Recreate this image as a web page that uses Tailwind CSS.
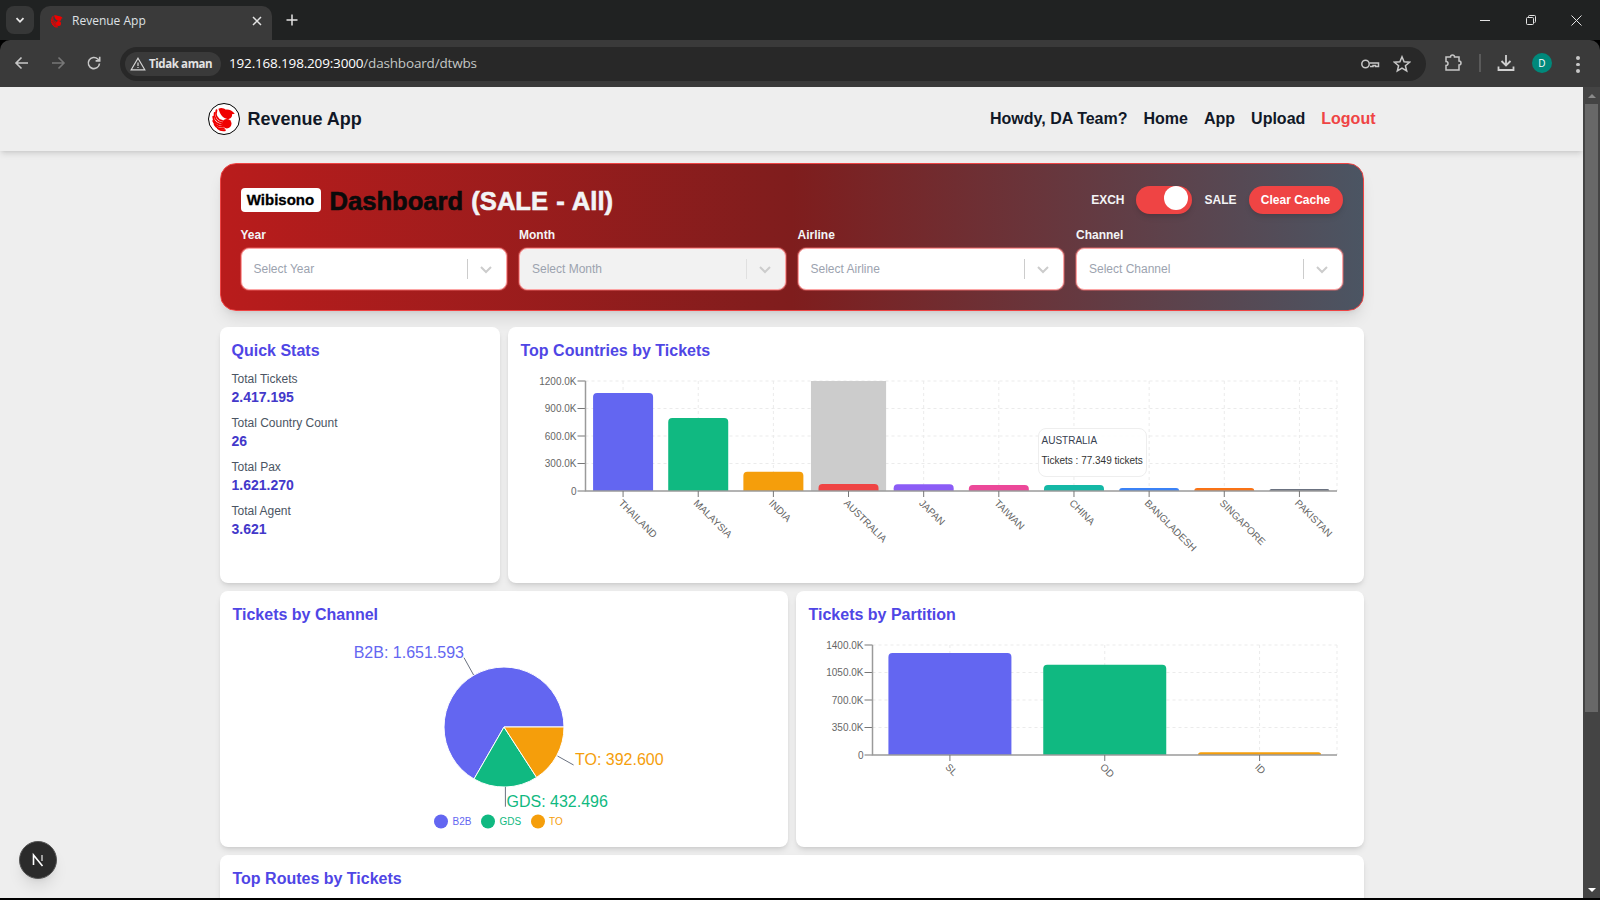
<!DOCTYPE html>
<html lang="en">
<head>
  <meta charset="UTF-8" />
  <meta name="viewport" content="width=device-width, initial-scale=1" />
  <title>Revenue App</title>
  <script src="https://cdn.jsdelivr.net/npm/@tailwindcss/browser@4"></script>
</head>
<body class="h-screen overflow-hidden flex flex-col bg-black font-['Liberation_Sans',Arial,sans-serif]">

  <!-- logo used by the tab and the navbar -->
  <svg class="hidden">
    <symbol id="bird" viewBox="0 0 32 32">
      <g fill="none" stroke="#f00000" stroke-width="1.9" stroke-linecap="round">
        <path d="M8 6.500C6.500 11 8 16 14 18" />
        <path d="M6 9.500C5 14 7.500 19 14 20.500" />
        <path d="M4.500 13.500C4.500 18 8 21.500 14.500 22.500" />
        <path d="M4.500 18C6 22 10 24.500 15 24.500" />
        <path d="M6 22C8 25.500 12 27 16 26.500" />
        <path d="M9.500 26C11.500 27.800 14 28.500 17 28" />
      </g>
      <path fill="#f00000" d="M10 5C13 3.500 16 4.500 18 6C21 5.500 25 7 27.500 10.500L24.500 11C25 13 24 15.500 21 16C17 16 13 13 11.500 9Z" />
      <circle cx="19" cy="21" r="5" fill="#f00000" />
    </symbol>
  </svg>

  <!-- browser tab strip -->
  <div class="relative h-10 shrink-0 bg-[#202222] flex items-end font-['Open_Sans',sans-serif]">
    <div class="absolute left-[6px] top-[6px] w-7 h-7 rounded-lg bg-[#363737] flex items-center justify-center">
      <svg width="12" height="12" viewBox="0 0 12 12" fill="none" stroke="#e8e8e8" stroke-width="1.8"><path d="M2.500 4.200 6 7.800 9.500 4.200" /></svg>
    </div>
    <div class="ml-10 w-[232px] h-[34px] rounded-t-[10px] bg-[#3a3a3a] flex items-center pl-[9px] pr-[9px] pb-[5px] text-[12px] text-[#dfe1e5]">
      <svg width="16" height="16" class="shrink-0"><use href="#bird" /></svg>
      <span class="ml-[7px] flex-1">Revenue App</span>
      <svg width="12" height="12" viewBox="0 0 12 12" stroke="#e3e3e3" stroke-width="1.5"><path d="M2 2 10 10M10 2 2 10" /></svg>
    </div>
    <svg class="ml-[13px] mb-[13px]" width="14" height="14" viewBox="0 0 14 14" stroke="#e3e3e3" stroke-width="1.5"><path d="M7 1.500V12.500M1.500 7H12.500" /></svg>
    <div class="ml-auto flex items-center h-10 text-[#e3e3e3]">
      <svg class="mr-[36px]" width="10" height="10" viewBox="0 0 10 10" stroke="currentColor"><path d="M0 5.500H10" /></svg>
      <svg class="mr-[35px]" width="10" height="10" viewBox="0 0 10 10" fill="none" stroke="currentColor"><rect x=".5" y="2.500" width="7" height="7" rx="1" /><path d="M2.500 2.500V1.500Q2.500 .5 3.500 .5H8.500Q9.500 .5 9.500 1.500V6.500Q9.500 7.500 8.500 7.500" /></svg>
      <svg class="mr-[18px]" width="11" height="11" viewBox="0 0 11 11" stroke="currentColor"><path d="M.5 .5 10.500 10.500M10.500 .5 .5 10.500" /></svg>
    </div>
  </div>

  <!-- browser toolbar -->
  <div class="h-[47px] shrink-0 bg-[#3a3a3a] rounded-t-[10px] flex items-center font-['Open_Sans',sans-serif] relative">
    <svg class="absolute left-[13px] top-[14px]" width="18" height="18" viewBox="0 0 18 18" fill="none" stroke="#c7c7c7" stroke-width="1.6"><path d="M15 9H3.500M8.500 3.500 3 9l5.500 5.500" /></svg>
    <svg class="absolute left-[49px] top-[14px]" width="18" height="18" viewBox="0 0 18 18" fill="none" stroke="#777" stroke-width="1.600"><path d="M3 9H14.500M9.500 3.500 15 9l-5.500 5.500" /></svg>
    <svg class="absolute left-[85px] top-[14px]" width="18" height="18" viewBox="0 0 18 18" fill="none" stroke="#c7c7c7" stroke-width="1.600"><path d="M14.500 9.500A5.600 5.600 0 1 1 12.800 5L14.500 6.700" /><path d="M14.700 2.800V6.900H10.600" /></svg>

    <div class="ml-[120px] w-[1306px] h-[34px] rounded-full bg-[#282828] flex items-center pl-[5px] relative">
      <div class="h-6 w-[96px] rounded-full bg-[#3a3a3a] flex items-center pl-[5px] text-[11.5px] font-bold text-[#e3e3e3] tracking-[-0.4px]">
        <svg width="16" height="16" viewBox="0 0 16 16" fill="none" stroke="#d5d5d5" stroke-width="1.200"><path d="M8 2.200 14.800 13.800H1.200Z" /><path d="M8 6.500V10M8 11V12" /></svg>
        <span class="ml-[3px]">Tidak aman</span>
      </div>
      <div class="ml-2 text-[13.5px] text-white tracking-[-0.17px]">192.168.198.209:3000<span class="text-[#c4c7c5]">/dashboard/dtwbs</span></div>
      <svg class="absolute left-[1240px] top-[9px]" width="20" height="16" viewBox="0 0 20 16" fill="none" stroke="#c7c7c7" stroke-width="1.500"><circle cx="5.500" cy="8" r="3.700" /><path d="M9.500 7H18.500V10.500H15.500V9.500H13V10.500H10" /></svg>
      <svg class="absolute left-[1273px] top-[8px]" width="18" height="18" viewBox="0 0 18 18" fill="none" stroke="#c7c7c7" stroke-width="1.500"><path d="M9 1.800 11.100 6.800 16.500 7.200 12.400 10.700 13.700 16 9 13.200 4.300 16 5.600 10.700 1.500 7.200 6.900 6.800Z" /></svg>
    </div>

    <svg class="absolute left-[1444px] top-[14px]" width="18" height="18" viewBox="0 0 18 18" fill="none" stroke="#c7c7c7" stroke-width="1.500"><path d="M2 3H6.500Q6.500 1 8.500 1T10.500 3H15V7Q17 7 17 9T15 11V16H2V11.500Q4 11.500 4 9.500T2 7.500Z" /></svg>
    <div class="absolute left-[1479px] top-[14px] w-[2px] h-[18px] bg-[#5a5a5a]"></div>
    <svg class="absolute left-[1497px] top-[14px]" width="18" height="18" viewBox="0 0 18 18" fill="none" stroke="#d0d0d0" stroke-width="1.800"><path d="M9 1V11M4.500 7 9 11.500 13.500 7M1.500 12.500V16H16.500V12.500" /></svg>
    <div class="absolute left-[1532px] top-[13px] w-5 h-5 rounded-full bg-[#00897b] text-[10px] text-white flex items-center justify-center">D</div>
    <div class="absolute left-[1576px] top-[16px] flex flex-col gap-[3px]">
      <div class="w-[3.500px] h-[3.500px] rounded-full bg-[#c7c7c7]"></div>
      <div class="w-[3.500px] h-[3.500px] rounded-full bg-[#c7c7c7]"></div>
      <div class="w-[3.500px] h-[3.500px] rounded-full bg-[#c7c7c7]"></div>
    </div>
  </div>

  <!-- page + scrollbar -->
  <div class="flex-1 min-h-0 flex">
    <div class="relative flex-1 min-w-0 bg-[#eeeeee] overflow-hidden">
      <header class="h-16 shadow-md bg-[#eeeeee]">
        <div class="w-[1168px] h-full mx-auto flex items-center justify-between text-[#111827] font-bold">
          <div class="flex items-center gap-2 text-[18px]">
            <div class="w-8 h-8 rounded-full bg-white border border-black">
              <svg width="30" height="30"><use href="#bird" /></svg>
            </div>
            Revenue App
          </div>
          <nav class="flex items-center gap-4 text-[16px]">
            <span>Howdy, DA Team?</span>
            <a>Home</a>
            <a>App</a>
            <a>Upload</a>
            <a class="text-[#ef4444]">Logout</a>
          </nav>
        </div>
      </header>

      <main class="w-[1144px] mx-auto pt-3">
        <!-- filter hero -->
        <section class="h-[148px] rounded-2xl border border-[#ef4444] shadow-lg bg-linear-to-r/srgb from-[#b91c1c] via-[#7f1d1d] to-[#4b5563] p-5 mb-4">
          <div class="flex items-center justify-between h-8 mb-[11px]">
            <div class="flex items-center gap-[9px]">
              <span class="h-6 w-[80px] rounded bg-white text-black font-bold text-[15px] [-webkit-text-stroke:0.3px] flex items-center justify-center">Wibisono</span>
              <h1 class="text-[25.6px] leading-8 pt-[2px] font-bold text-[#0a0a0a] [-webkit-text-stroke:0.6px] [word-spacing:1px]">Dashboard <span class="text-[#f3f4f6]">(SALE - All)</span></h1>
            </div>
            <div class="flex items-center gap-3 text-[12px] font-bold text-[#f3f4f6]">
              <span>EXCH</span>
              <div class="relative w-14 h-7 rounded-full bg-[#ef4444] shadow-md">
                <div class="absolute right-1 top-0 w-6 h-6 rounded-full bg-white"></div>
              </div>
              <span>SALE</span>
              <button class="h-7 w-[94px] rounded-full bg-[#ef4444] text-white text-[12px] shadow-md">Clear Cache</button>
            </div>
          </div>
          <div class="grid grid-cols-4 gap-3">
            <div>
              <label class="block text-[12px] leading-4 font-bold text-[#f3f4f6] mb-[5px]">Year</label>
              <div class="h-[42px] rounded-lg bg-white border border-[#fca5a5] ring-1 ring-[#f87171]/40 flex items-center pl-3 text-[12px] text-[#9ca3af]">
                <span class="flex-1">Select Year</span>
                <div class="w-px h-5 bg-[#ccc]"></div>
                <svg class="ml-[11px] mr-[13px]" width="14" height="14" viewBox="0 0 14 14" fill="none" stroke="#ccc" stroke-width="2"><path d="M2 5 7 10 12 5" /></svg>
              </div>
            </div>
            <div>
              <label class="block text-[12px] leading-4 font-bold text-[#f3f4f6] mb-[5px]">Month</label>
              <div class="h-[42px] rounded-lg bg-[#f2f2f2] border border-[#fca5a5] ring-1 ring-[#f87171]/40 flex items-center pl-3 text-[12px] text-[#9ca3af]">
                <span class="flex-1">Select Month</span>
                <div class="w-px h-5 bg-[#e0e0e0]"></div>
                <svg class="ml-[11px] mr-[13px]" width="14" height="14" viewBox="0 0 14 14" fill="none" stroke="#ccc" stroke-width="2"><path d="M2 5 7 10 12 5" /></svg>
              </div>
            </div>
            <div>
              <label class="block text-[12px] leading-4 font-bold text-[#f3f4f6] mb-[5px]">Airline</label>
              <div class="h-[42px] rounded-lg bg-white border border-[#fca5a5] ring-1 ring-[#f87171]/40 flex items-center pl-3 text-[12px] text-[#9ca3af]">
                <span class="flex-1">Select Airline</span>
                <div class="w-px h-5 bg-[#ccc]"></div>
                <svg class="ml-[11px] mr-[13px]" width="14" height="14" viewBox="0 0 14 14" fill="none" stroke="#ccc" stroke-width="2"><path d="M2 5 7 10 12 5" /></svg>
              </div>
            </div>
            <div>
              <label class="block text-[12px] leading-4 font-bold text-[#f3f4f6] mb-[5px]">Channel</label>
              <div class="h-[42px] rounded-lg bg-white border border-[#fca5a5] ring-1 ring-[#f87171]/40 flex items-center pl-3 text-[12px] text-[#9ca3af]">
                <span class="flex-1">Select Channel</span>
                <div class="w-px h-5 bg-[#ccc]"></div>
                <svg class="ml-[11px] mr-[13px]" width="14" height="14" viewBox="0 0 14 14" fill="none" stroke="#ccc" stroke-width="2"><path d="M2 5 7 10 12 5" /></svg>
              </div>
            </div>
          </div>
        </section>

        <!-- row 1 -->
        <div class="grid grid-cols-4 gap-2 mb-2">
          <div class="h-64 bg-white rounded-lg shadow-md p-3">
            <h2 class="text-base font-bold text-[#4f46e5] mb-2">Quick Stats</h2>
            <div class="space-y-2">
              <div><p class="text-xs text-[#4b5563]">Total Tickets</p><p class="text-sm font-bold text-[#4338ca]">2.417.195</p></div>
              <div><p class="text-xs text-[#4b5563]">Total Country Count</p><p class="text-sm font-bold text-[#4338ca]">26</p></div>
              <div><p class="text-xs text-[#4b5563]">Total Pax</p><p class="text-sm font-bold text-[#4338ca]">1.621.270</p></div>
              <div><p class="text-xs text-[#4b5563]">Total Agent</p><p class="text-sm font-bold text-[#4338ca]">3.621</p></div>
            </div>
          </div>
          <div class="relative col-span-3 h-64 bg-white rounded-lg shadow-md p-3">
            <h2 class="ml-px text-base font-bold text-[#4f46e5]">Top Countries by Tickets</h2>
            <svg id="countries" width="832" height="208" viewBox="520 363 832 208" class="block overflow-visible"></svg>
            <!-- hover tooltip -->
            <div class="absolute left-[530px] top-[101px] w-[109px] h-[49px] rounded-lg bg-white/90 border border-[#eeeeee] pl-[3px] pt-[5px] text-[10px] whitespace-nowrap">
              <p class="leading-[14px] text-[#374151]">AUSTRALIA</p>
              <p class="mt-[6px] leading-[14px] text-[#333]">Tickets : 77.349 tickets</p>
            </div>
          </div>
        </div>

        <!-- row 2 -->
        <div class="grid grid-cols-2 gap-2 mb-2">
          <div class="h-64 bg-white rounded-lg shadow-md p-3">
            <h2 class="ml-px text-base font-bold text-[#4f46e5]">Tickets by Channel</h2>
            <svg width="544" height="208" viewBox="232 627 544 208" class="block overflow-visible font-['Liberation_Sans',sans-serif]">
              <path d="M504 727L564 727A60 60 0 1 0 474 779Z" fill="#6366f1" stroke="#fff" />
              <path d="M504 727L474 779A60 60 0 0 0 536.600 777.400Z" fill="#10b981" stroke="#fff" />
              <path d="M504 727L536.600 777.400A60 60 0 0 0 564 727Z" fill="#f59e0b" stroke="#fff" />
              <g stroke="#6b7280" fill="none">
                <path d="M473.600 675 464 657.700" />
                <path d="M557.500 756 573.600 765" />
                <path d="M505.400 787V806.700" />
              </g>
              <text x="464" y="658" text-anchor="end" font-size="16" fill="#6366f1">B2B: 1.651.593</text>
              <text x="575" y="765" font-size="16" fill="#f59e0b">TO: 392.600</text>
              <text x="506.500" y="807" font-size="16" fill="#10b981">GDS: 432.496</text>
              <circle cx="441" cy="821.500" r="7" fill="#6366f1" />
              <text x="452.500" y="825" font-size="10" fill="#6366f1">B2B</text>
              <circle cx="488" cy="821.500" r="7" fill="#10b981" />
              <text x="499.600" y="825" font-size="10" fill="#10b981">GDS</text>
              <circle cx="538" cy="821.500" r="7" fill="#f59e0b" />
              <text x="549" y="825" font-size="10" fill="#f59e0b">TO</text>
            </svg>
          </div>
          <div class="h-64 bg-white rounded-lg shadow-md p-3">
            <h2 class="ml-px text-base font-bold text-[#4f46e5]">Tickets by Partition</h2>
            <svg id="partition" width="544" height="208" viewBox="808 627 544 208" class="block overflow-visible"></svg>
          </div>
        </div>

        <!-- row 3, cut off by the fold -->
        <div class="h-64 bg-white rounded-lg shadow-md p-3">
          <h2 class="ml-px text-base font-bold text-[#4f46e5]">Top Routes by Tickets</h2>
        </div>
      </main>

      <!-- next dev badge -->
      <div class="absolute left-[19px] top-[754px] w-[38px] h-[38px] rounded-full bg-[#2b2b2b] border border-[#555] shadow-lg flex items-center justify-center">
        <svg width="16" height="16" viewBox="0 0 16 16" fill="none" stroke="#fff" stroke-width="1.600"><path d="M3.500 13V3L12.500 14" /><path d="M12 3V9" stroke="#bbb" /></svg>
      </div>
    </div>

    <!-- scrollbar -->
    <div class="relative w-[17px] shrink-0 bg-[#444444]">
      <div class="absolute left-[5px] top-[7px] w-0 h-0 border-x-[4px] border-x-transparent border-b-[4px] border-b-[#8a8a8a]"></div>
      <div class="absolute left-[2px] top-[17px] w-[13px] h-[608px] bg-[#686868]"></div>
      <div class="absolute left-[5px] bottom-[6px] w-0 h-0 border-x-[4px] border-x-transparent border-t-[4px] border-t-white"></div>
    </div>
  </div>
  <div class="h-[2px] shrink-0 bg-black"></div>

  <script>
    var colors = ['#6366f1', '#10b981', '#f59e0b', '#ef4444', '#8b5cf6', '#ec4899', '#14b8a6', '#3b82f6', '#f97316', '#6b7280'];

    // draws recharts-like bars, coordinates are page pixels (see viewBox)
    function barChart(id, c) {
      var step = (c.right - c.left) / c.tops.length;
      var rowH = (c.base - c.top) / (c.yLabels.length - 1);
      var s = '';

      c.yLabels.forEach(function (l, i) {
        var y = c.top + i * rowH;
        if (i < c.yLabels.length - 1) {
          s += '<path d="M' + c.left + ' ' + y + 'H' + c.right + '" stroke="#ebebeb" stroke-dasharray="3 3" />';
        }
        s += '<path d="M' + (c.left - 8) + ' ' + y + 'H' + c.left + '" stroke="#777" />';
        s += '<text x="' + (c.left - 9) + '" y="' + (y + 3.500) + '" text-anchor="end" font-size="10" fill="#666">' + l + '</text>';
      });

      for (var i = 0; i < c.tops.length; i++) {
        var cx = c.left + step * (i + 0.5);
        s += '<path d="M' + cx + ' ' + c.top + 'V' + c.base + '" stroke="#ebebeb" stroke-dasharray="3 3" />';
      }
      s += '<path d="M' + c.right + ' ' + c.top + 'V' + c.base + '" stroke="#ebebeb" stroke-dasharray="3 3" />';

      if (c.hover != null) {
        s += '<rect x="' + (c.left + step * c.hover) + '" y="' + c.top + '" width="' + step + '" height="' + (c.base - c.top) + '" fill="#ccc" />';
      }

      c.tops.forEach(function (t, i) {
        var x = c.left + step * (i + 0.5) - c.barW / 2;
        var r = Math.min(4, c.base - t);
        s += '<path fill="' + colors[i] + '" d="M' + x + ' ' + c.base + 'V' + (t + r) + 'Q' + x + ' ' + t + ' ' + (x + r) + ' ' + t +
          'H' + (x + c.barW - r) + 'Q' + (x + c.barW) + ' ' + t + ' ' + (x + c.barW) + ' ' + (t + r) + 'V' + c.base + 'Z" />';
      });

      s += '<path d="M' + c.left + ' ' + c.top + 'V' + c.base + 'H' + c.right + '" fill="none" stroke="#9a9a9a" stroke-width="1.500" />';

      c.xLabels.forEach(function (l, i) {
        var cx = c.left + step * (i + 0.5);
        s += '<path d="M' + cx + ' ' + c.base + 'v6" stroke="#777" />';
        s += '<text transform="translate(' + (cx + 4) + ' ' + (c.base + 3.500) + ') rotate(45)" y="13" font-size="10" fill="#666">' + l + '</text>';
      });

      var el = document.getElementById(id);
      el.style.fontFamily = '"Liberation Sans", sans-serif';
      el.innerHTML = s;
    }

    barChart('countries', {
      left: 585.5, right: 1337, top: 381, base: 491, barW: 60, hover: 3,
      yLabels: ['1200.0K', '900.0K', '600.0K', '300.0K', '0'],
      tops: [393, 418, 471.7, 484, 484.3, 485, 485, 488, 488, 489],
      xLabels: ['THAILAND', 'MALAYSIA', 'INDIA', 'AUSTRALIA', 'JAPAN', 'TAIWAN', 'CHINA', 'BANGLADESH', 'SINGAPORE', 'PAKISTAN']
    });

    barChart('partition', {
      left: 872.5, right: 1337, top: 645, base: 755, barW: 123,
      yLabels: ['1400.0K', '1050.0K', '700.0K', '350.0K', '0'],
      tops: [653, 664.7, 752.3],
      xLabels: ['SL', 'OD', 'ID']
    });
  </script>
</body>
</html>
